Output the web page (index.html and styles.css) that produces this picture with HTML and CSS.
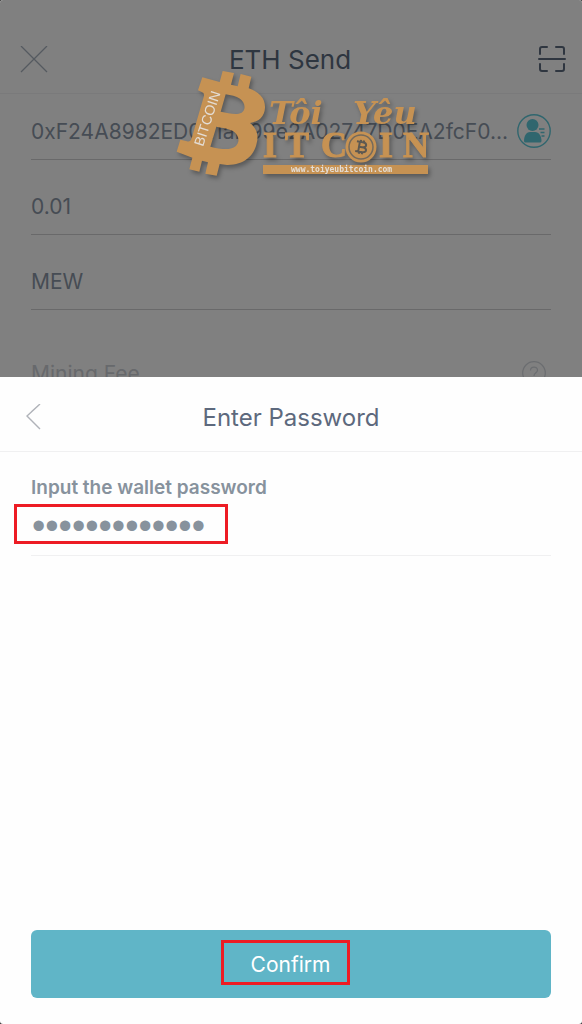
FILE: index.html
```
<!DOCTYPE html>
<html lang="en">
<head>
    <meta charset="UTF-8">
    <meta name="viewport" content="width=device-width, initial-scale=1.0">
    <title>ETH Send</title>
    <link rel="stylesheet" href="styles.css">
</head>
<body>
    <main class="app">
        <section class="send">
            <header class="send-header">
                <button type="button" class="icon-button" aria-label="Close">
                    <svg width="28" height="28" viewBox="0 0 28 28" fill="none" stroke="#555a60" stroke-width="1.3">
                        <path d="M1 0L27 26M27 0L1 26"/>
                    </svg>
                </button>
                <h1>ETH Send</h1>
                <button type="button" class="icon-button scan" aria-label="Scan QR code">
                    <svg width="28" height="28" viewBox="0 0 28 28" fill="none" stroke="#2f3640" stroke-width="2" stroke-linecap="round" stroke-linejoin="round">
                        <path d="M2 8V3Q2 1 4 1H9M18 1H24Q26 1 26 3V8M2 18V23Q2 25 4 25H9M18 25H24Q26 25 26 23V18M1 13H27"/>
                    </svg>
                </button>
            </header>

            <form class="send-form">
                <div class="field field-address">
                    <input type="text" id="address" aria-label="Address" value="0xF24A8982ED0E1aD99e2A02747D0EA2fcF0..." readonly>
                    <button type="button" class="icon-button" aria-label="Contacts">
                        <svg width="34" height="34" viewBox="0 0 34 34">
                            <circle cx="17" cy="17" r="16.2" fill="none" stroke="#30666e" stroke-width="1.4"/>
                            <circle cx="15.5" cy="11" r="6" fill="#30666e"/>
                            <path d="M7 27C7 21 10 18 13 18H18C22 18 24.500 22 24.500 27Q24.500 28.500 23 28.500H8.500Q7 28.500 7 27Z" fill="#30666e"/>
                            <path d="M22 15H27.500M23.500 18.500H27.500M24.500 22H27.500" stroke="#30666e" stroke-width="1.4"/>
                        </svg>
                    </button>
                </div>
                <div class="field">
                    <input type="text" id="amount" aria-label="Amount" value="0.01" readonly>
                </div>
                <div class="field">
                    <input type="text" id="memo" aria-label="Memo" value="MEW" readonly>
                </div>
                <div class="fee">
                    <span>Mining Fee</span>
                    <svg width="24" height="24" viewBox="0 0 24 24" fill="none" stroke="#6b6d70" stroke-width="1.2">
                        <circle cx="12" cy="12" r="11.300"/>
                        <path d="M8.500 9.500C8.500 5 15.500 5 15.500 9.200C15.500 12 12 11.700 12 15M12 16.800V18.200"/>
                    </svg>
                </div>
            </form>

            <svg class="watermark" width="262" height="120" viewBox="0 0 262 120" fill="#c69253">
                <g transform="scale(.33333)">
                    <path fill-rule="evenodd" d="M158 33L192 39L183 74L203 79L212 42L244 50L236 85C268 96 286 116 285 143C284 169 267 185 240 189C259 204 267 224 260 250C252 289 220 316 171 315L149 312L140 347L106 341L114 307L96 302L88 335L58 328L67 293L20 275L31 239L51 244Q61 247 65 235L101 111Q105 99 95 96L84 91L97 52L149 66ZM167 103L152 155C177 160 200 166 215 158C229 149 225 126 210 116C198 108 183 106 167 103ZM139 200L121 260C150 267 179 272 195 260C211 248 207 227 193 216C179 205 158 204 139 200Z"/>
                </g>
                <text class="mark-coin" transform="translate(33 87) rotate(-72)">BITCOIN</text>
                <text class="mark-script" x="99" y="64">Tôi</text>
                <text class="mark-script" x="183" y="64">Yêu</text>
                <text class="mark-name" x="93" y="97">I</text>
                <text class="mark-name" x="115" y="97">T</text>
                <text class="mark-name" x="151" y="97">C</text>
                <circle cx="191" cy="87" r="15.500"/>
                <circle cx="191" cy="87" r="12" fill="none" stroke="#746a5c" stroke-width="1.500"/>
                <g transform="translate(191 87) rotate(10)" fill="none" stroke="#5d5951" stroke-width="2">
                    <path d="M-5 -5H1C6 -5 6 0 1 0H-2M1 0C7 0 7 5 1 5H-5M-2 -5V5M-1 -7V-5M2 -7V-5M-1 5V7M2 5V7"/>
                </g>
                <text class="mark-name" x="209" y="97">I</text>
                <text class="mark-name" x="233" y="97">N</text>
                <rect x="93" y="105" width="165" height="9"/>
                <text class="mark-url" x="121" y="112">www.toiyeubitcoin.com</text>
            </svg>
        </section>

        <section class="sheet">
            <header class="sheet-header">
                <button type="button" class="icon-button" aria-label="Back">
                    <svg width="28" height="28" viewBox="0 0 28 28" fill="none" stroke="#b0b3b9" stroke-width="1.4">
                        <path d="M14 0L1 12L14 25"/>
                    </svg>
                </button>
                <h2>Enter Password</h2>
            </header>

            <form class="password-form">
                <div class="password-group">
                    <label for="password">Input the wallet password</label>
                    <div class="highlight highlight-password">
                        <input type="password" id="password" value="1234567890123">
                    </div>
                </div>
                <button type="button" class="confirm"><span class="highlight highlight-confirm">Confirm</span></button>
            </form>
        </section>
    </main>
</body>
</html>
```
FILE: styles.css
```
* {
    box-sizing: border-box;
}
body {
    margin: 0;
    background: #333;
    font-family: Inter, "Liberation Sans", sans-serif;
}
h1, h2 {
    margin: 0;
    font-size: 24px;
    font-weight: 400;
    text-align: center;
}
input {
    width: 100%;
    min-width: 0;
    padding: 0;
    border: none;
    outline: none;
    background: none;
    font-family: inherit;
}
button {
    padding: 0;
    border: none;
    background: none;
    font-family: inherit;
    cursor: pointer;
}
svg {
    display: block;
}
.app {
    display: flex;
    flex-direction: column;
    min-height: 100vh;
    border-radius: 3px;
    overflow: hidden;
    background: #fefefe;
}

/* Dimmed send screen */
.send {
    position: relative;
    background: #808080;
}
.send-header {
    display: grid;
    grid-template-columns: 28px 1fr 34px;
    align-items: center;
    padding: 44px 16px 18px 20px;
    border-bottom: 1px solid #7a7a7b;
    color: #2e3640;
}
.send-header h1 {
    font-size: 26px;
    line-height: 31px;
}
.scan {
    justify-self: end;
}
.send-form {
    padding: 0 31px;
}
.field {
    display: flex;
    align-items: center;
    height: 75px;
    padding-top: 18px;
    border-bottom: 1px solid #69696a;
}
.field input {
    height: 34px;
    font-size: 21px;
    color: #464c54;
}
.field-address {
    height: 66px;
    padding-top: 9px;
}
.fee {
    display: flex;
    justify-content: space-between;
    height: 67px;
    padding: 51px 5px 0 0;
    overflow: hidden;
    font-size: 21px;
    line-height: 26px;
    color: #67696c;
}
.fee svg {
    flex: none;
}

/* Logo lying over the screen */
.watermark {
    position: absolute;
    top: 60px;
    left: 170px;
    filter: drop-shadow(2px 3px 2px rgba(0, 0, 0, 0.3));
}
.mark-coin {
    font: 14px "Liberation Sans", sans-serif;
    fill: #e4ddd5;
}
.mark-script {
    font: italic bold 32px "DejaVu Serif", serif;
}
.mark-name {
    font: bold 36px "Liberation Serif", serif;
    stroke: #c69253;
    stroke-width: 1px;
}
.mark-url {
    font: bold 8px "DejaVu Sans Mono", monospace;
    fill: #e4ddd5;
}

/* Password sheet */
.sheet {
    display: flex;
    flex: 1;
    flex-direction: column;
}
.sheet-header {
    display: grid;
    grid-template-columns: 32px 1fr 32px;
    align-items: center;
    padding: 26px 26px 18px;
    border-bottom: 1px solid #f0f0f1;
    color: #5d697d;
}
.sheet-header h2 {
    line-height: 30px;
}
.password-form {
    display: flex;
    flex: 1;
    flex-direction: column;
    justify-content: space-between;
    padding: 24px 31px 26px;
}
.password-group {
    padding-bottom: 11px;
    border-bottom: 1px solid #f0f0f1;
}
.password-group label {
    display: block;
    margin-bottom: 4px;
    font-size: 19px;
    font-weight: 600;
    line-height: 24px;
    color: #87929d;
}
.highlight {
    border: 3px solid #ed1c24;
}
.highlight-password {
    width: 214px;
    margin-left: -17px;
    padding: 0 14px 0 15px;
}
.highlight-password input {
    display: block;
    height: 34px;
    padding-top: 4px;
    font-family: "Liberation Sans", sans-serif;
    font-size: 38px;
    color: #87929d;
}
.confirm {
    display: flex;
    align-items: center;
    justify-content: center;
    width: 100%;
    height: 68px;
    padding: 0 11px 3px 0;
    border-radius: 6px;
    background: #60b5c7;
    color: #fff;
    font-size: 21px;
}
.highlight-confirm {
    padding: 4px 17px 0 27px;
    line-height: 35px;
}
```
